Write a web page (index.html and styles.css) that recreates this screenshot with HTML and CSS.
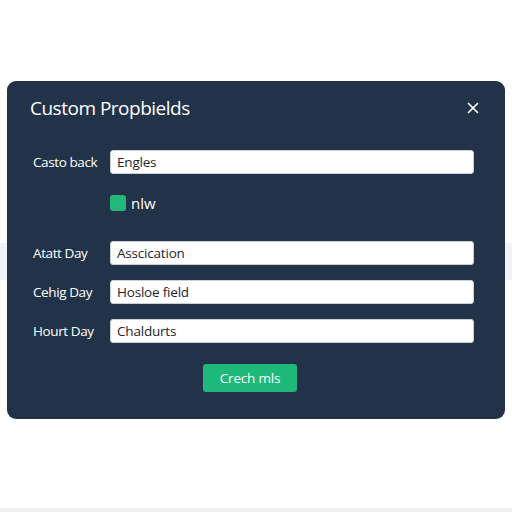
FILE: index.html
```html
<!DOCTYPE html>
<html>
<head>
<meta charset="utf-8">
<link rel="stylesheet" href="styles.css">
</head>
<body>
<div class="page">
  <div class="modal">
    <div class="modal-header">
      <h1 class="title">Custom Propbields</h1>
      <button class="close" aria-label="Close">
        <svg width="12" height="12" viewBox="0 0 12 12"><path d="M1.5 1.5 L10.5 10.5 M10.5 1.5 L1.5 10.5" stroke="#ffffff" stroke-width="1.7" stroke-linecap="round"/></svg>
      </button>
    </div>
    <div class="form">
      <div class="row">
        <label class="label">Casto back</label>
        <div class="input">Engles</div>
      </div>
      <div class="check-row">
        <span class="checkbox"></span>
        <span class="check-label">nlw</span>
      </div>
      <div class="group">
        <div class="row">
          <label class="label">Atatt Day</label>
          <div class="input">Asscication</div>
        </div>
        <div class="row">
          <label class="label">Cehig Day</label>
          <div class="input">Hosloe field</div>
        </div>
        <div class="row">
          <label class="label">Hourt Day</label>
          <div class="input">Chaldurts</div>
        </div>
      </div>
    </div>
    <div class="footer">
      <button class="btn">Crech mls</button>
    </div>
  </div>
</div>
</body>
</html>
```

FILE: styles.css
```css
html, body {
  margin: 0;
  padding: 0;
}
body {
  width: 512px;
  height: 512px;
  font-family: "Open Sans", "Noto Sans", "Liberation Sans", sans-serif;
  background: linear-gradient(to bottom,
    #ffffff 0, #ffffff 243px,
    #f2f3f5 243px, #f2f3f5 280px,
    #ffffff 280px, #ffffff 508px,
    #f0f1f3 508px);
}
.page {
  padding: 81px 7px 0 7px;
}
.modal {
  width: 498px;
  height: 338px;
  box-sizing: border-box;
  background: #223349;
  border-radius: 9px;
  padding: 15px 0 0 0;
  color: #ffffff;
}
.modal-header {
  display: flex;
  align-items: center;
  justify-content: space-between;
  padding: 0 26px 0 23px;
  height: 24px;
}
.title {
  margin: 0;
  font-size: 19px;
  font-weight: 500;
  letter-spacing: -0.5px;
  line-height: 24px;
}
.close {
  background: none;
  border: 0;
  padding: 0;
  width: 12px;
  height: 12px;
  display: flex;
}
.form {
  padding: 30px 31px 0 26px;
}
.row {
  display: grid;
  grid-template-columns: 77px 1fr;
  align-items: center;
  height: 24px;
}
.label {
  font-size: 13.5px;
  font-weight: 500;
  letter-spacing: -0.4px;
  color: #ffffff;
}
.input {
  height: 24px;
  box-sizing: border-box;
  background: #ffffff;
  border-radius: 3px;
  border: 1px solid #c9d0d8;
  padding: 0 6px;
  font-size: 13.5px;
  letter-spacing: -0.2px;
  line-height: 22px;
  color: #1e2530;
}
.check-row {
  display: flex;
  align-items: center;
  gap: 5px;
  margin: 20px 0 0 77px;
  height: 17px;
}
.checkbox {
  width: 16px;
  height: 16px;
  background: #21b879;
  border-radius: 3px;
}
.check-label {
  font-size: 15px;
  color: #ffffff;
}
.group {
  display: flex;
  flex-direction: column;
  gap: 15px;
  margin-top: 30px;
}
.footer {
  display: flex;
  justify-content: center;
  padding: 21px 12px 0 0;
}
.btn {
  width: 94px;
  height: 28px;
  border: 0;
  border-radius: 3px;
  background: #1db87a;
  color: #ffffff;
  font-family: "Open Sans", "Noto Sans", "Liberation Sans", sans-serif;
  font-size: 13.5px;
  letter-spacing: -0.2px;
  padding: 0;
}
```
